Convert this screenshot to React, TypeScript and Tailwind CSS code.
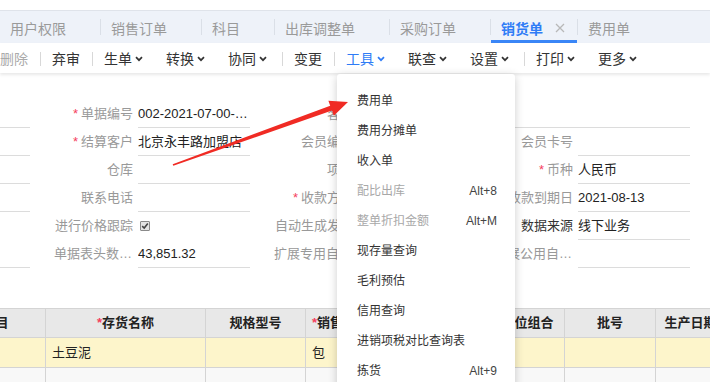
import React from 'react';

type Tab = { label: string; active?: boolean };
type Tool = { label: string; chevron?: boolean; disabled?: boolean; active?: boolean; sep?: boolean };
type Cell = {
  label?: string;
  req?: boolean;
  value?: string;
  line?: boolean;
  check?: boolean;
  dark?: boolean;
  span?: boolean;
};
type MenuItem = { label: string; shortcut?: string; disabled?: boolean };

const TABS: Tab[] = [
  { label: '用户权限' },
  { label: '销售订单' },
  { label: '科目' },
  { label: '出库调整单' },
  { label: '采购订单' },
  { label: '销货单', active: true },
  { label: '费用单' },
];

// sep: 뒤에 구분선이 오는 항목
const TOOLS: Tool[] = [
  { label: '删除', disabled: true, sep: true },
  { label: '弃审', sep: true },
  { label: '生单', chevron: true },
  { label: '转换', chevron: true },
  { label: '协同', chevron: true, sep: true },
  { label: '变更', sep: true },
  { label: '工具', chevron: true, active: true },
  { label: '联查', chevron: true },
  { label: '设置', chevron: true, sep: true },
  { label: '打印', chevron: true },
  { label: '更多', chevron: true },
];

const ROWS: Cell[][] = [
  [
    { line: true },
    { label: '单据编号', req: true, value: '002-2021-07-00-0001', line: true },
    { label: '客户', line: true, span: true },
  ],
  [
    { line: true },
    { label: '结算客户', req: true, value: '北京永丰路加盟店', line: true },
    { label: '会员编号', line: true },
    { label: '会员卡号', line: true },
  ],
  [
    { line: true },
    { label: '仓库', line: true },
    { label: '项目', line: true },
    { label: '币种', req: true, value: '人民币', line: true },
  ],
  [
    { line: true },
    { label: '联系电话', line: true },
    { label: '收款方式', req: true, line: true },
    { label: '收款到期日', value: '2021-08-13', line: true },
  ],
  [
    {},
    { label: '进行价格跟踪', check: true },
    { label: '自动生成发票' },
    { label: '数据来源', value: '线下业务', line: true, dark: true },
  ],
  [
    { line: true },
    { label: '单据表头数据合计', value: '43,851.32', line: true },
    { label: '扩展专用自定义项', line: true },
    { label: '扩展公用自定义项', line: true },
  ],
];

const COLUMNS = [
  { label: '项目', w: 'w-[100px]' },
  { label: '存货名称', w: 'w-[160px]', req: true },
  { label: '规格型号', w: 'w-[100px]' },
  { label: '销售单位', w: 'w-[70px]', req: true },
  { label: '数量', w: 'w-[89px]' },
  { label: '计量单位组合', w: 'w-[100px]' },
  { label: '批号', w: 'w-[91px]' },
  { label: '生产日期', w: 'w-[70px]' },
];

const MENU: MenuItem[] = [
  { label: '费用单' },
  { label: '费用分摊单' },
  { label: '收入单' },
  { label: '配比出库', shortcut: 'Alt+8', disabled: true },
  { label: '整单折扣金额', shortcut: 'Alt+M', disabled: true },
  { label: '现存量查询' },
  { label: '毛利预估' },
  { label: '信用查询' },
  { label: '进销项税对比查询表' },
  { label: '拣货', shortcut: 'Alt+9' },
];

function Chevron({ color }: { color: string }) {
  return (
    <svg width="8" height="6" viewBox="0 0 8 6" className="ml-[3px]">
      <path d="M1 1.2 L4 4.2 L7 1.2" fill="none" stroke={color} strokeWidth="1.7" />
    </svg>
  );
}

function FormCell({ cell }: { cell: Cell }) {
  return (
    <div className="flex h-[28px] w-[220px] shrink-0 pl-[21px]">
      <div
        className={`w-[79px] shrink-0 self-center truncate text-right text-[13px] leading-[18px] ${
          cell.dark ? 'text-[#333]' : 'text-[#999]'
        }`}
      >
        {cell.req && <span className="mr-[3px] text-[#f5405e]">*</span>}
        {cell.label}
      </div>
      <div
        className={`ml-[5px] flex shrink-0 items-center ${cell.span ? 'w-[332px]' : 'w-[112px]'} ${
          cell.line ? 'border-b border-[#dcdcdc]' : ''
        }`}
      >
        {cell.check ? (
          <span className="ml-[2px] flex h-[10px] w-[10px] items-center justify-center rounded-[1px] border border-[#8a8a8a] bg-[#e4e4e4]">
            <svg width="8" height="8" viewBox="0 0 8 8">
              <path d="M1.2 4.2 L3.2 6 L6.8 1.6" fill="none" stroke="#444" strokeWidth="1.6" />
            </svg>
          </span>
        ) : (
          <span className="truncate text-[13px] leading-[18px] text-[#222]">{cell.value}</span>
        )}
      </div>
    </div>
  );
}

export default function App() {
  return (
    <div className="relative h-[382px] w-[710px] overflow-hidden bg-white font-['Liberation_Sans','Noto_Sans_CJK_SC',sans-serif]">
      {/* 탭 바 */}
      <div className="pt-[10px]">
        <div className="flex h-[33px] border-t border-[#dfe3ea] bg-[#eef2f9]">
          {TABS.map((tab, i) => (
            <React.Fragment key={tab.label}>
              {i > 0 && <div className="h-[16px] w-px shrink-0 self-center bg-[#dadfe7]" />}
              <div
                className={`relative flex shrink-0 items-center pt-[3px] pl-[10px] pr-[34px] text-[14px] leading-[20px] ${
                  tab.active ? 'font-bold text-[#2f7cf6]' : 'text-[#9a9a9a]'
                }`}
              >
                {tab.label}
                {tab.active && (
                  <>
                    <svg width="10" height="10" viewBox="0 0 10 10" className="absolute right-[12px] top-[12px]">
                      <path d="M1 1 L9 9 M9 1 L1 9" stroke="#b8b8b8" strokeWidth="1.3" />
                    </svg>
                    <div className="absolute bottom-0 left-0 right-0 h-[3px] bg-[#3a86f7]" />
                  </>
                )}
              </div>
            </React.Fragment>
          ))}
        </div>
      </div>

      {/* 툴바 */}
      <div className="relative z-10 flex h-[30px] items-center bg-white pt-[2px] shadow-[0_2px_3px_rgba(0,0,0,0.09)]">
        {TOOLS.map((tool, i) => (
          <React.Fragment key={tool.label}>
            <div
              className={`flex items-center pr-[12px] text-[14px] leading-[20px] ${i === 0 ? 'pl-0' : 'pl-[11px]'} ${
                tool.disabled ? 'text-[#aaa]' : tool.active ? 'text-[#2f7cf6]' : 'text-[#333]'
              }`}
            >
              {tool.label}
              {tool.chevron && <Chevron color={tool.active ? '#2f7cf6' : '#333'} />}
            </div>
            {tool.sep && (
              <div className={`h-[14px] w-px bg-[#d8d8d8] ${tool.chevron ? 'ml-[3px]' : ''}`} />
            )}
          </React.Fragment>
        ))}
      </div>

      {/* 표 머리 */}
      <div className="ml-[-187px] flex flex-col pt-[27px]">
        {ROWS.map((row, r) => (
          <div key={r} className="flex">
            {row.map((cell, c) => (
              <FormCell key={c} cell={cell} />
            ))}
          </div>
        ))}
      </div>

      {/* 명세 표 */}
      <table className="mt-[40px] ml-[-55px] w-[780px] min-w-[780px] table-fixed border-collapse">
        <colgroup>
          {COLUMNS.map((col) => (
            <col key={col.label} className={col.w} />
          ))}
        </colgroup>
        <thead>
          <tr className="h-[29px] bg-[#e8e8e8]">
            {COLUMNS.map((col) => (
              <th
                key={col.label}
                className="overflow-hidden border border-[#d4d4d4] p-0 text-center text-[13px] font-bold leading-[18px] whitespace-nowrap text-[#222]"
              >
                {col.req && <span className="text-[#f5405e]">*</span>}
                {col.label}
              </th>
            ))}
          </tr>
        </thead>
        <tbody>
          <tr className="h-[30px] bg-[#fdf5cb]">
            {COLUMNS.map((col, i) => (
              <td key={col.label} className="border border-[#d4d4d4] px-[6px] text-[13px] leading-[18px] text-[#222]">
                {i === 1 ? '土豆泥' : i === 3 ? '包' : ''}
              </td>
            ))}
          </tr>
          <tr className="h-[30px] bg-[#f8f8f8]">
            {COLUMNS.map((col) => (
              <td key={col.label} className="border border-[#d4d4d4]" />
            ))}
          </tr>
        </tbody>
      </table>

      {/* 工具 드롭다운 */}
      <div className="absolute left-[337px] top-[74px] z-20 h-[330px] w-[178px] rounded-[3px] bg-white pt-[12px] shadow-[0_2px_10px_rgba(0,0,0,0.2)]">
        {MENU.map((item) => (
          <div key={item.label} className="flex h-[30px] items-center justify-between pl-[20px] pr-[18px] text-[12px] leading-[16px]">
            <span className={item.disabled ? 'text-[#a8a8a8]' : 'text-[#333]'}>{item.label}</span>
            {item.shortcut && <span className="text-[#444]">{item.shortcut}</span>}
          </div>
        ))}
      </div>

      {/* 빨간 화살표 */}
      <svg className="pointer-events-none absolute left-0 top-0 z-30" width="710" height="382" viewBox="0 0 710 382">
        <polygon
          points="173.3,165.8 332,110.5 333.8,115.7 348,102 328.4,100.7 330.2,105.8 172.7,164.2"
          fill="#f02b24"
        />
      </svg>
    </div>
  );
}
